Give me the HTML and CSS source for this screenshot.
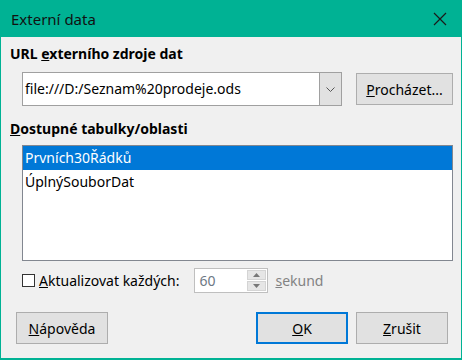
FILE: index.html
```html
<!DOCTYPE html>
<html lang="cs">
<head>
    <meta charset="UTF-8">
    <title>Externí data</title>
    <link rel="stylesheet" href="styles.css">
</head>
<body>
    <div class="window">
        <div class="titlebar">
            <span class="title">Externí data</span>
            <svg class="close" width="14" height="14" viewBox="0 0 14 14">
                <path d="M1 1 L13 13 M13 1 L1 13" stroke="#1a1a1a" stroke-width="1.2" fill="none"/>
            </svg>
        </div>

        <div class="content">
            <div class="heading">URL <u>e</u>xterního zdroje dat</div>
            <div class="url-row">
                <div class="combo">
                    <span class="combo-text">file:///D:/Seznam%20prodeje.ods</span>
                    <span class="combo-arrow">
                        <svg width="9" height="5" viewBox="0 0 9 5">
                            <path d="M0.5 0.5 L4.5 4.5 L8.5 0.5" stroke="#555" stroke-width="1" fill="none"/>
                        </svg>
                    </span>
                </div>
                <button class="btn btn-browse"><u>P</u>rocházet...</button>
            </div>

            <div class="heading heading-list"><u>D</u>ostupné tabulky/oblasti</div>
            <div class="listbox">
                <div class="list-item selected">Prvních30Řádků</div>
                <div class="list-item">ÚplnýSouborDat</div>
            </div>

            <div class="update-row">
                <span class="checkbox"></span>
                <span class="update-label"><u>A</u>ktualizovat každých:</span>
                <div class="spin">
                    <span class="spin-value">60</span>
                    <span class="spin-buttons">
                        <span class="spin-btn">
                            <svg width="7" height="4" viewBox="0 0 7 4"><path d="M0 4 L3.5 0 L7 4 Z" fill="#777"/></svg>
                        </span>
                        <span class="spin-btn">
                            <svg width="7" height="4" viewBox="0 0 7 4"><path d="M0 0 L3.5 4 L7 0 Z" fill="#777"/></svg>
                        </span>
                    </span>
                </div>
                <span class="unit"><u>s</u>ekund</span>
            </div>

            <div class="button-row">
                <button class="btn btn-help"><u>N</u>ápověda</button>
                <div class="button-group">
                    <button class="btn btn-default"><u>O</u>K</button>
                    <button class="btn"><u>Z</u>rušit</button>
                </div>
            </div>
        </div>
    </div>
</body>
</html>
```

FILE: styles.css
```css
body {
    margin: 0;
    font-family: "Noto Sans", "Open Sans", sans-serif;
    font-size: 14px;
    color: #000;
}
.window {
    width: 462px;
    height: 360px;
    box-sizing: border-box;
    border: 1px solid #00b294;
    border-top: none;
    border-bottom-width: 2px;
    background-color: #f0f0f0;
}
.titlebar {
    height: 37px;
    background-color: #00b294;
    display: flex;
    align-items: center;
    justify-content: space-between;
    padding: 0 14px 0 10px;
}
.title {
    font-size: 15px;
    color: #111;
}
.content {
    padding: 7px 8px 0 9px;
}
.heading {
    font-weight: bold;
    line-height: 20px;
}
.heading-list {
    margin-top: 13px;
}
.url-row {
    display: flex;
    align-items: center;
    margin-top: 8px;
    padding-left: 12px;
    height: 34px;
}
.combo {
    width: 320px;
    height: 34px;
    box-sizing: border-box;
    border: 1px solid #a0a0a0;
    background-color: #fff;
    display: flex;
}
.combo-text {
    flex: 1;
    line-height: 32px;
    padding-left: 2px;
}
.combo-arrow {
    width: 21px;
    background-color: #e1e1e1;
    border-left: 1px solid #a0a0a0;
    display: flex;
    align-items: center;
    justify-content: center;
}
.btn {
    height: 32px;
    width: 92px;
    box-sizing: border-box;
    border: 1px solid #adadad;
    background-color: #e1e1e1;
    font-family: inherit;
    font-size: 14px;
    color: #000;
    padding: 0;
}
.btn-browse {
    width: 97px;
    margin-left: 14px;
}
.listbox {
    margin: 6px 0 0 12px;
    height: 116px;
    box-sizing: border-box;
    border: 1px solid #828790;
    background-color: #fff;
}
.list-item {
    height: 24px;
    line-height: 24px;
    padding-left: 2px;
}
.list-item.selected {
    background-color: #0078d7;
    color: #fff;
}
.update-row {
    display: flex;
    align-items: center;
    height: 25px;
    margin-top: 7px;
    padding-left: 12px;
}
.checkbox {
    width: 13px;
    height: 13px;
    box-sizing: border-box;
    border: 1px solid #333;
    background-color: #fff;
}
.update-label {
    margin-left: 4px;
}
.spin {
    margin-left: 15px;
    width: 74px;
    height: 25px;
    box-sizing: border-box;
    border: 1px solid #bfbfbf;
    background-color: #fff;
    display: flex;
}
.spin-value {
    flex: 1;
    color: #6d7884;
    line-height: 23px;
    padding-left: 4px;
}
.spin-buttons {
    width: 19px;
    display: flex;
    flex-direction: column;
    gap: 1px;
    padding: 1px;
}
.spin-btn {
    flex: 1;
    background-color: #e6e6e6;
    border: 1px solid #d4d4d4;
    display: flex;
    align-items: center;
    justify-content: center;
}
.unit {
    margin-left: 7px;
    color: #838383;
}
.button-row {
    display: flex;
    justify-content: space-between;
    margin-top: 19px;
    padding-left: 6px;
    padding-right: 5px;
}
.button-group {
    display: flex;
    gap: 8px;
}
.btn-default {
    border: 2px solid #0078d7;
}
```
